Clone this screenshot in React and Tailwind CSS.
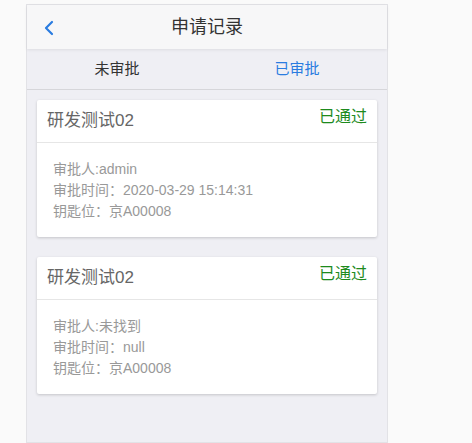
import React from 'react';

const records = [
  { name: '研发测试02', status: '已通过', approver: 'admin', time: '2020-03-29 15:14:31', slot: '京A00008' },
  { name: '研发测试02', status: '已通过', approver: '未找到', time: 'null', slot: '京A00008' },
];

export default function App() {
  return (
    <div
      className="min-h-[443px] bg-[#fafafa] pt-[4px] pl-[26px]"
      style={{ fontFamily: '"Liberation Sans", "Noto Sans CJK SC", sans-serif' }}
    >
      <div className="w-[362px] h-[439px] bg-[#efeff4] border border-[#e2e2e6] flex flex-col">
        {/* header */}
        <div className="h-[44px] bg-[#f7f7f8] flex items-center relative shadow-[0_1px_3px_rgba(0,0,0,0.08)]">
          <svg className="absolute left-[16px] top-[15px]" width="12" height="16" viewBox="0 0 12 16">
            <path d="M9 2 L3 8 L9 14" fill="none" stroke="#2a7ce0" strokeWidth="2.2" strokeLinecap="round" strokeLinejoin="round" />
          </svg>
          <div className="flex-1 text-center text-[18px] text-[#333]">申请记录</div>
        </div>

        {/* tabs */}
        <div className="h-[41px] flex border-b border-[#d6d6da] text-[15px]">
          <div className="flex-1 flex items-center justify-center text-[#333]">未审批</div>
          <div className="flex-1 flex items-center justify-center text-[#2a7ce0]">已审批</div>
        </div>

        {/* list */}
        <div className="flex flex-col gap-[20px] px-[10px] pt-[10px]">
          {records.map((r, i) => (
            <div key={i} className="bg-white rounded-[2px] shadow-[0_1px_3px_rgba(0,0,0,0.18)]">
              <div className="h-[43px] border-b border-[#e6e6e6] flex justify-between px-[10px]">
                <div className="text-[17px] text-[#666] pt-[8px]">{r.name}</div>
                <div className="text-[16px] text-[#1d8a1d] pt-[5px]">{r.status}</div>
              </div>
              <div className="px-[16px] pt-[16px] pb-[15px] text-[14px] text-[#999] leading-[21px]">
                <div>审批人:{r.approver}</div>
                <div>审批时间：{r.time}</div>
                <div>钥匙位：{r.slot}</div>
              </div>
            </div>
          ))}
        </div>
      </div>
    </div>
  );
}
